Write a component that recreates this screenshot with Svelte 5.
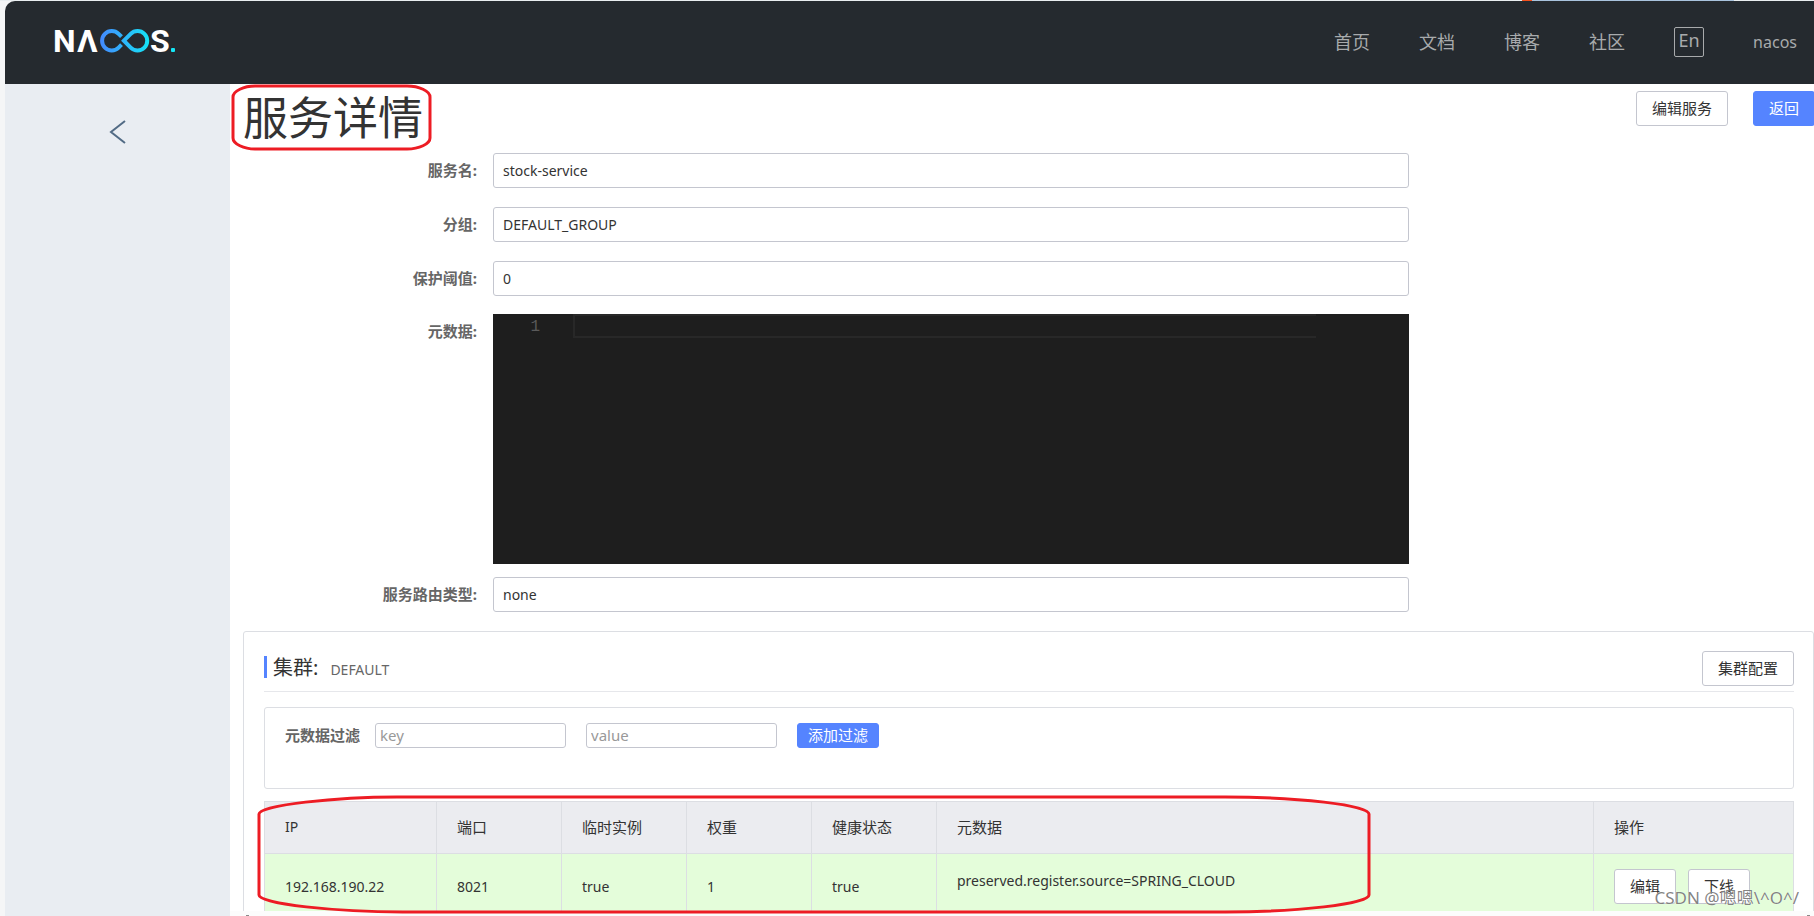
<script lang="ts">
	interface Instance {
		ip: string;
		port: number;
		ephemeral: boolean;
		weight: number;
		healthy: boolean;
		metadata: string;
	}

	const navLinks = ['首页', '文档', '博客', '社区'];

	const instances: Instance[] = [
		{
			ip: '192.168.190.22',
			port: 8021,
			ephemeral: true,
			weight: 1,
			healthy: true,
			metadata: 'preserved.register.source=SPRING_CLOUD'
		}
	];

	let service = $state({
		name: 'stock-service',
		groupName: 'DEFAULT_GROUP',
		protectThreshold: '0',
		metadata: '',
		selectorType: 'none'
	});
	let filterKey = $state('');
	let filterValue = $state('');
</script>

<div class="app">
	<div class="tab-strip"></div>
	<div class="window">
		<header>
			<a class="logo" href="#home" aria-label="Nacos">
				<svg width="132" height="50" viewBox="50 17 132 50">
					<defs>
						<linearGradient id="loop" gradientUnits="userSpaceOnUse" x1="100" y1="0" x2="150" y2="0">
							<stop offset="0" stop-color="#4489ff" />
							<stop offset="1" stop-color="#14e6f6" />
						</linearGradient>
					</defs>
					<g class="logo-text">
						<text x="53" y="52">N</text>
						<text x="77" y="52">Λ</text>
						<text x="150" y="52">S</text>
					</g>
					<g fill="none" stroke="url(#loop)" stroke-width="4">
						<path d="M121.5 36.7 L118.6 33.8 A9.7 9.7 0 1 0 118.6 47.6 L121.5 44.7" />
						<path d="M123.9 40.7 L130.7 33.8 A9.7 9.7 0 1 1 130.7 47.6 Z" />
					</g>
					<rect x="171" y="48" width="4" height="4" rx="1" fill="#14e6f6" />
				</svg>
			</a>
			<nav>
				{#each navLinks as link}
					<a href="#{link}">{link}</a>
				{/each}
				<button class="lang">En</button>
				<a class="user" href="#user">nacos</a>
			</nav>
		</header>

		<div class="body">
			<aside>
				<button class="collapse" aria-label="返回上一级">
					<svg width="18" height="24" viewBox="0 0 18 24" fill="none" stroke="#526b85" stroke-width="2">
						<path d="M16 1 L2 12 L16 23" />
					</svg>
				</button>
			</aside>

			<main>
				<div class="page-head">
					<h1>
						服务详情
						<svg class="mark" width="202" height="68" viewBox="0 0 202 68">
							<path d="M24 2 H176 C188 2 199 7 199 13 V54 C199 60 188 65 176 65 H24 C13 65 2 60 2 54 V13 C2 7 13 2 24 2 Z" />
						</svg>
					</h1>
					<div class="actions">
						<button class="btn">编辑服务</button>
						<button class="btn primary">返回</button>
					</div>
				</div>

				<form>
					<div class="field">
						<label for="name">服务名:</label>
						<input id="name" readonly bind:value={service.name} />
					</div>
					<div class="field">
						<label for="group">分组:</label>
						<input id="group" readonly bind:value={service.groupName} />
					</div>
					<div class="field">
						<label for="threshold">保护阈值:</label>
						<input id="threshold" readonly bind:value={service.protectThreshold} />
					</div>
					<div class="field editor-field">
						<label for="metadata">元数据:</label>
						<div class="editor">
							<span class="line-no">1</span>
							<textarea id="metadata" rows="1" readonly bind:value={service.metadata}></textarea>
						</div>
					</div>
					<div class="field">
						<label for="selector">服务路由类型:</label>
						<input id="selector" readonly bind:value={service.selectorType} />
					</div>
				</form>

				<section class="cluster">
					<div class="cluster-head">
						<h2>集群:</h2>
						<span class="cluster-name">DEFAULT</span>
						<button class="btn">集群配置</button>
					</div>

					<div class="filter">
						<label for="filter-key">元数据过滤</label>
						<input id="filter-key" placeholder="key" bind:value={filterKey} />
						<input aria-label="value" placeholder="value" bind:value={filterValue} />
						<button class="btn primary small">添加过滤</button>
					</div>

					<div class="table-wrap">
						<table>
							<colgroup>
								<col class="col-ip" />
								<col class="col-sm" />
								<col class="col-sm" />
								<col class="col-sm" />
								<col class="col-sm" />
								<col />
								<col class="col-ops" />
							</colgroup>
							<thead>
								<tr>
									<th class="latin">IP</th>
									<th>端口</th>
									<th>临时实例</th>
									<th>权重</th>
									<th>健康状态</th>
									<th>元数据</th>
									<th>操作</th>
								</tr>
							</thead>
							<tbody>
								{#each instances as item}
									<tr class:healthy={item.healthy}>
										<td>{item.ip}</td>
										<td>{item.port}</td>
										<td>{item.ephemeral}</td>
										<td>{item.weight}</td>
										<td>{item.healthy}</td>
										<td><p>{item.metadata}</p></td>
										<td>
											<div class="ops">
												<button class="btn">编辑</button>
												<button class="btn">下线</button>
											</div>
										</td>
									</tr>
								{/each}
							</tbody>
						</table>
						<svg class="mark table-mark" width="1114" height="120" viewBox="0 0 1114 120">
							<path d="M140 3 H968 C1040 3 1112 11 1112 20 V101 C1112 110 1040 118 968 118 H146 C80 118 2 110 2 101 V20 C2 11 80 3 140 3 Z" />
						</svg>
					</div>
				</section>

				<!-- top edge of the horizontal scrollbar -->
				<div class="scroll-strip"><i></i><i></i></div>
			</main>
		</div>
	</div>
	<div class="watermark">CSDN @嗯嗯\^O^/</div>
</div>

<style>
	:global(body) {
		background: #fff;
	}

	.app {
		position: relative;
		display: flex;
		flex-direction: column;
		height: 100vh;
		overflow: hidden;
		background: #f5f6f7;
		font-family: 'Noto Sans', 'Noto Sans CJK SC', sans-serif;
		font-size: 15px;
		line-height: 20px;
		color: #333;
	}

	.app * {
		box-sizing: border-box;
	}

	button,
	input,
	textarea {
		font: inherit;
		color: inherit;
		margin: 0;
	}

	a {
		color: inherit;
		text-decoration: none;
	}

	.tab-strip {
		height: 1px;
		flex-shrink: 0;
		background: linear-gradient(
			to right,
			#e9eef0 calc(100% - 292px),
			#f4511e calc(100% - 292px) calc(100% - 282px),
			#a9c3dd calc(100% - 282px) calc(100% - 80px),
			#e9eef0 calc(100% - 80px)
		);
	}

	.window {
		flex: 1;
		min-height: 0;
		margin-left: 5px;
		display: flex;
		flex-direction: column;
		overflow: hidden;
		border-top-left-radius: 10px;
	}

	header {
		display: flex;
		align-items: center;
		justify-content: space-between;
		flex-shrink: 0;
		height: 83px;
		padding: 0 17px 2px 45px;
		background: #252a2f;
	}

	.logo {
		display: flex;
	}

	.logo-text {
		fill: #fff;
		font-family: Roboto, sans-serif;
		font-size: 32px;
		font-weight: 700;
	}

	nav {
		display: flex;
		align-items: center;
		gap: 49px;
		font-size: 18px;
		line-height: 24px;
		color: #a8aaac;
	}

	.lang {
		width: 30px;
		height: 30px;
		padding: 0 0 4px;
		border: 1px solid #a8aaac;
		border-radius: 2px;
		background: none;
	}

	.user {
		font-size: 16px;
	}

	.body {
		flex: 1;
		min-height: 0;
		display: flex;
	}

	aside {
		flex: 0 0 225px;
		background: #e9edf2;
		text-align: center;
	}

	.collapse {
		margin-top: 36px;
		padding: 0;
		border: none;
		background: none;
	}

	main {
		position: relative;
		flex: 1;
		min-width: 0;
		padding-left: 13px;
		overflow: hidden;
		background: #fff;
	}

	.page-head {
		display: flex;
		align-items: flex-start;
		justify-content: space-between;
		height: 69px;
	}

	h1 {
		position: relative;
		margin: 0;
		font-size: 45px;
		font-weight: 400;
		line-height: 67px;
	}

	.mark {
		position: absolute;
		z-index: 2;
		top: 0;
		left: -12px;
		fill: none;
		stroke: #ed1c24;
		stroke-width: 3;
		pointer-events: none;
	}

	.actions {
		display: flex;
		gap: 25px;
		padding-top: 7px;
		margin-right: -1px;
	}

	.btn {
		height: 35px;
		padding: 0 15px 2px;
		border: 1px solid #c4c6cf;
		border-radius: 3px;
		background: #fff;
		white-space: nowrap;
	}

	.btn.primary {
		border-color: #5584ff;
		background: #5584ff;
		color: #fff;
	}

	.btn.small {
		height: 25px;
		padding: 0 10px 2px;
	}

	.field {
		display: flex;
		align-items: center;
		gap: 16px;
		margin-bottom: 19px;
	}

	.field label {
		flex: 0 0 234px;
		padding-bottom: 2px;
		text-align: right;
		font-weight: 700;
		color: #666;
	}

	.field input,
	.editor {
		width: calc(100% * 14 / 24);
	}

	.field input {
		height: 35px;
		padding: 0 9px;
		border: 1px solid #c4c6cf;
		border-radius: 3px;
		background: #fff;
		font-size: 14px;
	}

	.editor-field {
		align-items: flex-start;
		margin: -1px 0 13px;
	}

	.editor-field label {
		padding-top: 7px;
	}

	.editor {
		display: flex;
		height: 250px;
		background: #1e1e1e;
	}

	.line-no {
		width: 80px;
		padding: 3px 33px 0 0;
		text-align: right;
		font-family: 'Liberation Mono', monospace;
		font-size: 16px;
		color: #5a5a5a;
	}

	.editor textarea {
		flex: 1;
		height: 24px;
		margin-right: 93px;
		padding: 0;
		border: 2px solid #282828;
		border-right: none;
		background: none;
		color: #d4d4d4;
		resize: none;
	}

	.cluster {
		border: 1px solid #dcdee3;
		border-radius: 3px;
		padding: 19px 19px 20px 20px;
	}

	.cluster-head {
		display: flex;
		align-items: flex-start;
		height: 41px;
		border-bottom: 1px solid #e6e7eb;
	}

	h2 {
		margin: 5px 0 0;
		padding: 2px 0 0 6px;
		border-left: 3px solid #5584ff;
		font-size: 20px;
		font-weight: 400;
		line-height: 20px;
	}

	.cluster-name {
		margin: 9px auto 0 12px;
		font-size: 14px;
		color: #666;
	}

	.filter {
		display: flex;
		align-items: flex-start;
		gap: 20px;
		height: 82px;
		margin-top: 15px;
		padding: 15px 20px;
		border: 1px solid #dcdee3;
		border-radius: 3px;
	}

	.filter label {
		margin-right: -5px;
		line-height: 24px;
		font-weight: 700;
		color: #666;
	}

	.filter input {
		width: 191px;
		height: 25px;
		padding: 0 4px 2px;
		border: 1px solid #c4c6cf;
		border-radius: 3px;
	}

	.filter input::placeholder {
		color: #999;
		opacity: 1;
	}

	.table-wrap {
		position: relative;
		margin-top: 12px;
	}

	.table-mark {
		top: -7px;
		left: -7px;
	}

	table {
		width: 100%;
		table-layout: fixed;
		border-collapse: collapse;
	}

	.col-ip {
		width: 172px;
	}

	.col-sm {
		width: 125px;
	}

	.col-ops {
		width: 200px;
	}

	th,
	td {
		padding: 15px 20px;
		border: 1px solid #dcdee3;
		text-align: left;
	}

	th {
		padding: 15px 20px 16px;
		background: #ebecf0;
		font-weight: 400;
	}

	td,
	.latin {
		font-size: 14px;
	}

	.healthy td {
		background: #e4fdda;
	}

	td p {
		margin: 0 0 12px;
	}

	.ops {
		display: flex;
		gap: 12px;
		font-size: 15px;
	}

	.scroll-strip {
		position: absolute;
		z-index: 1;
		left: 0;
		right: 0;
		bottom: 0;
		display: flex;
		justify-content: space-between;
		align-items: flex-end;
		height: 5px;
		padding: 0 4px 0 16px;
		background: #fcfcfc;
	}

	.scroll-strip i {
		width: 3px;
		height: 1px;
		background: #8a8a8a;
	}

	.watermark {
		position: absolute;
		z-index: 3;
		right: 15px;
		bottom: 6px;
		font-size: 17px;
		line-height: 24px;
		color: rgba(90, 90, 90, 0.75);
		text-shadow: 0 0 1px #fff;
	}
</style>
